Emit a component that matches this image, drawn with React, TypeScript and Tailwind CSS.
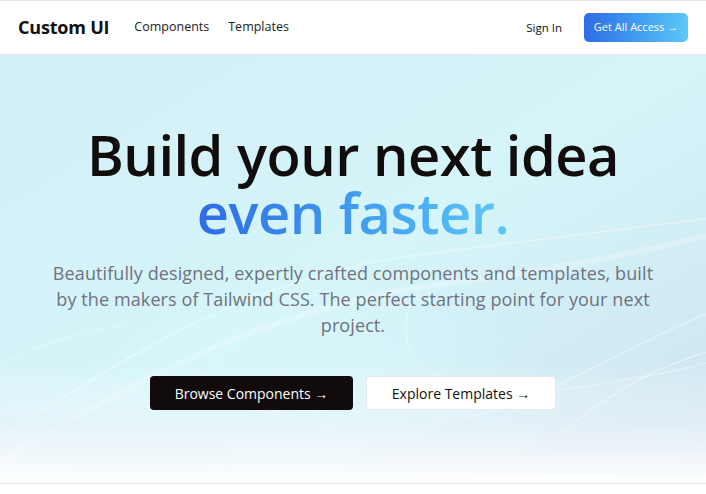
import React from 'react';

const font = { fontFamily: '"Open Sans", "Noto Sans", sans-serif' };

const HeroWaves = () => {
  return (
    <svg
      className="absolute inset-0 w-full h-full pointer-events-none"
      viewBox="0 0 706 429"
      preserveAspectRatio="none"
    >
      <defs>
        <radialGradient id="glow" cx="0.45" cy="0.85" r="0.35">
          <stop offset="0" stopColor="#d9f9fc" stopOpacity="0.9" />
          <stop offset="1" stopColor="#d9f9fc" stopOpacity="0" />
        </radialGradient>
        <linearGradient id="fade" x1="0" y1="0" x2="0" y2="1">
          <stop offset="0.72" stopColor="#ffffff" stopOpacity="0" />
          <stop offset="0.86" stopColor="#eef3f9" stopOpacity="0.6" />
          <stop offset="1" stopColor="#ffffff" stopOpacity="1" />
        </linearGradient>
      </defs>
      <rect x="0" y="0" width="706" height="429" fill="url(#glow)" />
      <path d="M-20 400 C 120 300, 260 220, 420 200 S 660 170, 740 160" stroke="#ffffff" strokeOpacity="0.35" strokeWidth="2" fill="none" />
      <path d="M-20 420 C 140 320, 280 250, 440 230 S 660 190, 740 175" stroke="#ffffff" strokeOpacity="0.25" strokeWidth="6" fill="none" />
      <path d="M420 230 C 380 300, 420 360, 600 330 S 700 300, 740 280" stroke="#ffffff" strokeOpacity="0.3" strokeWidth="1.5" fill="none" />
      <path d="M200 320 C 260 380, 420 400, 560 330 S 700 260, 740 250" stroke="#ffffff" strokeOpacity="0.35" strokeWidth="2" fill="none" />
      <path d="M560 380 C 620 330, 680 300, 740 290" stroke="#ffffff" strokeOpacity="0.4" strokeWidth="1.5" fill="none" />
      <path d="M0 310 C 40 290, 90 275, 130 270" stroke="#ffffff" strokeOpacity="0.25" strokeWidth="1.5" fill="none" />
      <rect x="0" y="0" width="706" height="429" fill="url(#fade)" />
    </svg>
  );
};

const NavBar = () => {
  return (
    <div className="h-[55px] flex flex-row items-center justify-between px-[18px] bg-white border-t border-b border-[#e4e6ec]">
      <div className="flex flex-row items-center">
        <span className="text-[18px] font-bold text-[#111111] tracking-[-0.2px]">Custom UI</span>
        <span className="ml-[25px] text-[12.5px] text-[#222222]">Components</span>
        <span className="ml-[19px] text-[12.5px] text-[#222222]">Templates</span>
      </div>
      <div className="flex flex-row items-center">
        <span className="text-[11.5px] text-[#111111]">Sign In</span>
        <div className="ml-[22px] h-[29px] w-[104px] flex items-center justify-center rounded-[5px] bg-gradient-to-r from-[#2f6be6] to-[#5cc8f8] text-white text-[11px]">
          Get All Access →
        </div>
      </div>
    </div>
  );
}

export default function App() {
  return (
    <div className="w-[706px] h-[494px] bg-white overflow-hidden" style={font}>
      <NavBar />
      <div className="relative h-[429px] bg-gradient-to-br from-[#d3eff6] via-[#d5f5f9] to-[#cde2ef] border-b border-[#e4e8f0]">
        <HeroWaves />
        <div className="relative flex flex-col items-center pt-[70px]">
          <h1 className="flex flex-col items-center text-[56px] font-semibold text-center tracking-[-0.5px]">
            <span className="block h-[58px] leading-[58px] text-[#110d0d]">Build your next idea</span>
            <span className="block h-[58px] leading-[58px] bg-gradient-to-r from-[#2f6be6] to-[#5cc8f8] bg-clip-text text-transparent">
              even faster.
            </span>
          </h1>
          <p className="mt-[19px] w-[612px] text-[18px] leading-[26px] tracking-[0.1px] text-[#6f7280] text-center">
            Beautifully designed, expertly crafted components and templates, built by the makers of Tailwind CSS. The
            perfect starting point for your next project.
          </p>
          <div className="mt-[38px] flex flex-row gap-[13px]">
            <div className="h-[34px] w-[203px] flex items-center justify-center rounded-[4px] bg-[#110b0b] text-white text-[14px]">
              Browse Components →
            </div>
            <div className="h-[34px] w-[190px] flex items-center justify-center rounded-[4px] bg-white border border-[#e6e9ef] text-[#111111] text-[14px]">
              Explore Templates →
            </div>
          </div>
        </div>
      </div>
    </div>
  );
}
